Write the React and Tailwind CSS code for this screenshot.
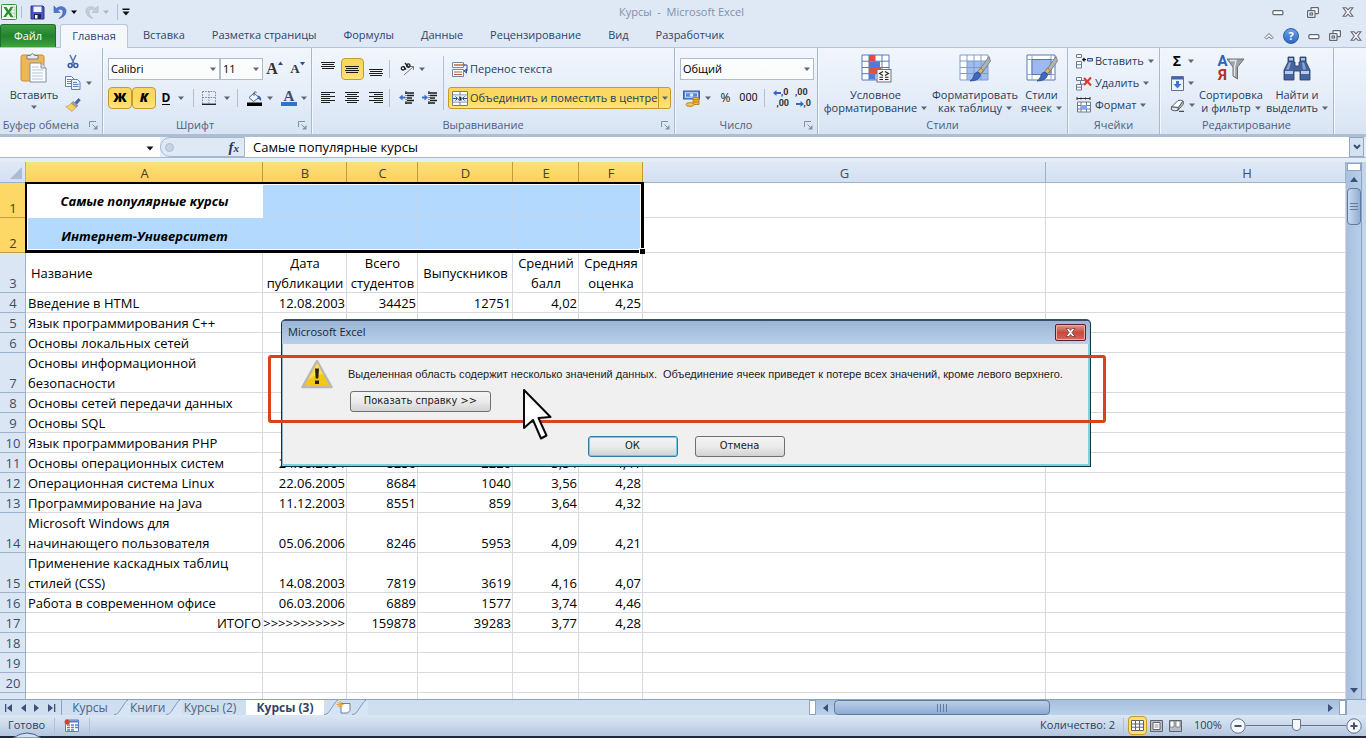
import React from "react";

const SANS = "font-['Open_Sans','Noto_Sans',sans-serif]";

/* ---------- small shared pieces ---------- */

function Arrow({ className = "" }) {
  return (
    <svg className={"shrink-0 " + className} width="6" height="4" viewBox="0 0 6 4" aria-hidden="true">
      <path d="M0 .5h6L3 4z" fill="#5c6675" />
    </svg>
  );
}

function Sep({ className = "h-[18px]" }) {
  return <span className={"w-px shrink-0 bg-[#b3c0d2] " + className} />;
}

function Launcher() {
  return (
    <button type="button" aria-label="Параметры группы" className="absolute bottom-1 right-1">
      <svg width="9" height="9" viewBox="0 0 9 9" fill="none" stroke="#8090a6">
        <path d="M.5 6V.5H7M3.500 3.500l3 3" />
        <path d="M8.500 4v4.500H4z" fill="#8090a6" stroke="none" />
      </svg>
    </button>
  );
}

function Group({ title, width, launcher, children }) {
  return (
    <section
      aria-label={title}
      className={
        "relative flex shrink-0 flex-col border-r border-[#a9b8cd] shadow-[1px_0_0_#f3f8fd] " + width
      }
    >
      <div className="flex h-[69px] items-start">{children}</div>
      <h2 className="text-center text-[11px] leading-4 text-[#4d6080]">{title}</h2>
      {launcher && <Launcher />}
    </section>
  );
}

function IconButton({ label, active, width = "w-[23px]", children }) {
  return (
    <button
      type="button"
      aria-label={label}
      className={
        "flex h-[22px] shrink-0 items-center justify-center gap-1 rounded-sm border [&>svg]:shrink-0 " +
        width +
        (active
          ? " border-[#c29b29] bg-gradient-to-b from-[#fbd667] via-[#fdd95a] to-[#fee57d]"
          : " border-transparent")
      }
    >
      {children}
    </button>
  );
}

function BigButton({ icon, lines, width, below }) {
  return (
    <button
      type="button"
      className={
        "flex shrink-0 flex-col items-center pt-1 text-[11px] leading-[13px] text-[#263c5f] " + width
      }
    >
      {icon}
      <span className="mt-1 whitespace-nowrap">{lines[0]}</span>
      {below ? (
        <Arrow className="mt-1" />
      ) : (
        <span className="flex items-center gap-1 whitespace-nowrap">
          {lines[1]}
          <Arrow />
        </span>
      )}
    </button>
  );
}

function SmallButton({ icon, text }) {
  return (
    <button type="button" className="flex h-[22px] items-center gap-[2px] text-[11px] text-[#263c5f]">
      {icon}
      <span>{text}</span>
      <Arrow className="ml-[2px]" />
    </button>
  );
}

function Combo({ label, value, width }) {
  return (
    <div className={"relative h-[22px] shrink-0 " + width}>
      <select
        aria-label={label}
        defaultValue={value}
        className="block h-[22px] w-full appearance-none border border-[#b0bccc] bg-white/80 pl-[2px] text-[11px] leading-4 text-black"
      >
        <option>{value}</option>
      </select>
      <Arrow className="pointer-events-none absolute right-1 top-[9px]" />
    </div>
  );
}

/* ---------- icons ---------- */

const XlLogo = () => (
  <svg width="16" height="16" viewBox="0 0 16 16">
    <rect x=".5" y=".5" width="15" height="15" rx="1" fill="#f2faf0" stroke="#3b8f3e" />
    <path d="M10 3h4v10h-4z" fill="#fff" stroke="#8fc58f" strokeWidth=".8" />
    <path d="M10 6h4M10 9h4" stroke="#8fc58f" strokeWidth=".8" />
    <path d="M2.500 3h3l2 3.200L9.700 3h2.600L9 8l3.500 5h-3L7.300 9.800 5 13H2.200L5.700 8z" fill="#2c8f34" />
  </svg>
);
const SaveIcon = () => (
  <svg width="15" height="15" viewBox="0 0 15 15">
    <path d="M1 1h12l1 1v12H1z" fill="#4a55c0" stroke="#2b3590" />
    <path d="M3.500 1.500h8v5.500h-8z" fill="#f3f5fc" />
    <path d="M4 9h7v5H4z" fill="#1f2552" />
    <path d="M5 10h2.500v3.500H5z" fill="#fff" />
  </svg>
);
const UndoIcon = () => (
  <svg width="14" height="14" viewBox="0 0 14 14">
    <path d="M1 1v6.500h6L4.800 5.300C7 3.300 10 4 10 7c0 2.500-1.500 4.500-4 6.500 5-1.500 7-4 7-7.500C13 1.500 7 .2 3.200 3.500z" fill="#4f79d0" stroke="#3058a8" strokeWidth=".6" />
  </svg>
);
const RedoIcon = () => (
  <svg width="14" height="14" viewBox="0 0 14 14">
    <path d="M13 1v6.500H7l2.200-2.200C7 3.300 4 4 4 7c0 2.500 1.500 4.500 4 6.500C3 12 1 9.500 1 6 1 1.500 7 .2 10.800 3.500z" fill="#c6ced8" stroke="#a9b3c0" strokeWidth=".6" />
  </svg>
);
const MinIcon = () => (
  <svg width="12" height="10" viewBox="0 0 12 10">
    <rect x=".9" y="3.700" width="10" height="4" rx="1" fill="#fff" stroke="#5f6875" strokeWidth="1.200" />
  </svg>
);
const RestoreIcon = () => (
  <svg width="12" height="11" viewBox="0 0 12 11" fill="#fff" stroke="#5f6875" strokeWidth="1.200">
    <rect x="4" y=".6" width="7.400" height="6" rx=".6" />
    <rect x=".6" y="3.600" width="7.400" height="6.800" rx=".6" />
    <rect x="3" y="6" width="2.600" height="2" />
  </svg>
);
const CloseIcon = () => (
  <svg width="12" height="10" viewBox="0 0 12 10">
    <path d="M1 .7h3l2 2.200L8 .7h3L7.700 5 11 9.300H8L6 7.100 4 9.300H1L4.300 5z" fill="#fff" stroke="#5f6875" strokeWidth="1.100" />
  </svg>
);
const PasteIcon = () => (
  <svg width="32" height="32" viewBox="0 0 32 32">
    <rect x="3" y="3" width="23" height="26" rx="2" fill="#eeb659" stroke="#c98f35" />
    <path d="M9 7V3.500h3.500Q14.500-.5 16.500 3.500H20V7z" fill="#e6e9ee" stroke="#77808d" />
    <path d="M12 11h11l5 5v14H12z" fill="#fdfeff" stroke="#7d8ea8" />
    <path d="M23 11v5h5" fill="#dbe4f2" stroke="#7d8ea8" />
    <path d="M14 15h7M14 18h11M14 21h11M14 24h11M14 27h11" stroke="#b5c3da" />
  </svg>
);
const CutIcon = () => (
  <svg width="14" height="15" viewBox="0 0 14 15" fill="none">
    <path d="M4 1l4 8.500M10 1L6 9.500" stroke="#5b7cb8" strokeWidth="1.600" />
    <circle cx="4.200" cy="11.500" r="2" stroke="#3458a8" strokeWidth="1.500" />
    <circle cx="9.800" cy="11.500" r="2" stroke="#3458a8" strokeWidth="1.500" />
  </svg>
);
const CopyIcon = () => (
  <svg width="16" height="14" viewBox="0 0 16 14" stroke="#5c7fc0">
    <path d="M.5.5h6l2 2v8h-8z" fill="#fff" />
    <path d="M2 3.500h4M2 5.500h5M2 7.500h5" />
    <path d="M6.500 3.500h6l2.500 2.500v7.500H6.500z" fill="#eaf1fc" />
    <path d="M8 6.500h4M8 8.500h5.500M8 10.500h5.500" />
  </svg>
);
const BrushIcon = () => (
  <svg width="16" height="14" viewBox="0 0 16 14">
    <path d="M10 4.500L13.500.5l1.800 1.600L12 6z" fill="#5367a5" stroke="#39498a" strokeWidth=".6" />
    <path d="M8.200 3.500l4.800 4-1.800 1.800-5-4z" fill="#9aa3b5" stroke="#68728a" strokeWidth=".6" />
    <path d="M6 5.300l5 4-4 4.200C5 11.500 3 11 .8 8.500 3 8.300 4.500 7 6 5.300z" fill="#f5d063" stroke="#b98f2c" strokeWidth=".6" />
  </svg>
);

const Lines = ({ rows, height = 14 }) => (
  <svg width="15" height={height} viewBox={"0 0 15 " + height} shapeRendering="crispEdges">
    {rows.map(([x, y, w], i) => (
      <rect key={i} x={x} y={y} width={w} height="1" fill="#1d1d1d" />
    ))}
  </svg>
);
const topLines = [[0, 0, 14], [1, 2, 12], [0, 4, 14], [1, 6, 12]];
const midLines = [[0, 4, 14], [1, 6, 12], [0, 8, 14], [1, 10, 12]];
const botLines = [[0, 7, 14], [1, 9, 12], [0, 11, 14], [1, 13, 12]];
const leftLines = [[0, 1, 14], [0, 3, 9], [0, 5, 14], [0, 7, 9], [0, 9, 14], [0, 11, 9]];
const centerLines = [[0, 1, 14], [2, 3, 10], [0, 5, 14], [2, 7, 10], [0, 9, 14], [2, 11, 10]];
const rightLines = [[0, 1, 14], [5, 3, 9], [0, 5, 14], [5, 7, 9], [0, 9, 14], [5, 11, 9]];

const OrientIcon = () => (
  <svg width="15" height="14" viewBox="0 0 15 14" fill="none" stroke="#222">
    <path d="M4 13L13.500 4.500M10 4.500h3.500V8" stroke="#777" />
    <circle cx="3" cy="6.300" r="1.700" strokeWidth="1.300" />
    <path d="M3.500 4L6 7.600M5 1l4 4.600" strokeWidth="1.300" />
    <circle cx="8.300" cy="3.500" r="1.700" strokeWidth="1.300" />
  </svg>
);
const IndentIcon = ({ right }) => (
  <svg width="16" height="14" viewBox="0 0 16 14">
    <path d="M6 2h9M8 4.500h7M8 7h5M8 9.500h7M6 12h7" stroke="#1d1d1d" strokeWidth="1.300" />
    <path d="M7 0v14" stroke="#1d1d1d" strokeDasharray="1 1" />
    <path d={right ? "M6 6.500L2.500 3.500v2H0v2h2.500v2z" : "M0 6.500l3.500-3v2H6v2H3.500v2z"} fill="#3f6fc4" />
  </svg>
);
const WrapIcon = () => (
  <svg width="16" height="15" viewBox="0 0 16 15">
    <path d="M.5.500h11v5H.5z" fill="#fff" stroke="#7486a5" />
    <path d="M2 3h11" stroke="#b5602c" strokeWidth="1.400" />
    <path d="M.5 7.500h11v7H.5z" fill="#fff" stroke="#7486a5" />
    <path d="M2 10h8M2 12.500h8" stroke="#b5602c" strokeWidth="1.200" />
    <path d="M12 3h3v6h-2M14.500 7L12 9l2.500 2z" fill="none" stroke="#2c4f94" />
  </svg>
);
const MergeIcon = () => (
  <svg width="16" height="15" viewBox="0 0 16 15">
    <path d="M.5.500h15v14H.5z" fill="#fff" stroke="#6d7c96" />
    <path d="M.5 4h15M.5 11h15M8 .5V4M8 11v3.500" stroke="#6d7c96" />
    <path d="M1 4.500h14v6H1z" fill="#dfeafa" />
    <path d="M1 7.500h4M3.500 5.500l2 2-2 2M15 7.500h-4M12.500 5.500l-2 2 2 2" fill="none" stroke="#2a4d9b" />
    <path d="M7 6.200q2-.8 2 .8v2.300M9 7.700q-2.300-.2-2.300.9T9 8.700" fill="none" stroke="#111" />
  </svg>
);
const BorderIcon = () => (
  <svg width="14" height="14" viewBox="0 0 14 14" fill="none" stroke="#7b8798">
    <path d="M.5.5h13v12M.5.5v12M7 .5v12M.5 6.500h13" strokeDasharray="1.500 1.200" />
    <path d="M0 13.300h14" stroke="#222" strokeWidth="1.400" />
  </svg>
);
const FillIcon = () => (
  <svg width="17" height="15" viewBox="0 0 17 15">
    <path d="M3 6.500L8 2l5 4.500-5.500 4z" fill="#eef3fb" stroke="#4c6186" />
    <path d="M8 5V1.500Q9.500-.5 10.500 2" fill="none" stroke="#4c6186" />
    <path d="M12 4.500q4 1 3 5.500-1.500-2-3.500-2.500z" fill="#3f62b2" />
    <path d="M1 11.500h15V15H1z" fill="#000" />
  </svg>
);
const MoneyIcon = () => (
  <svg width="18" height="17" viewBox="0 0 18 17">
    <rect x=".5" y="1" width="16" height="8" fill="#5b86d6" stroke="#3a5fae" />
    <rect x="2.500" y="2.800" width="12" height="4.400" fill="none" stroke="#cfe0fa" />
    <circle cx="8.500" cy="5" r="1.800" fill="#dbe7fb" />
    <path d="M10 7.500h6v7h-6z" fill="#eeb83b" stroke="#a97516" strokeWidth=".8" />
    <path d="M10 9.700h6M10 12h6" stroke="#a97516" strokeWidth=".8" />
    <ellipse cx="7" cy="14.500" rx="4" ry="1.900" fill="#f4c851" stroke="#a97516" strokeWidth=".8" />
  </svg>
);
const CondIcon = () => (
  <svg width="32" height="32" viewBox="0 0 32 32">
    <path d="M2 3h27v25H2z" fill="#fff" stroke="#5678b5" />
    <path d="M2 9.200h27M2 15.500h27M2 21.700h27M9 3v25M15 3v25M22 3v25" stroke="#5678b5" />
    <path d="M9 3h6v6H9zM9 16h12v5.500H9z" fill="#e2503c" />
    <path d="M9 9.500h11v6H9zM9 22h6v5.500H9z" fill="#4f7be0" />
    <rect x="17" y="17.500" width="14" height="12.500" fill="#f6f6f6" stroke="#70757d" />
    <path d="M23 19.500l-3.500 2 3.500 2M19.500 25.300H23M19.500 27.500H23M25 19.500l3.500 2-3.500 2M25 25.300h3.500M25 27.500h3.500" fill="none" stroke="#222" strokeWidth="1.100" />
  </svg>
);
const PaintStroke = () => (
  <g>
    <path d="M30 4.500L20.500 18l3 2.500L31.500 9z" fill="#aeb4b5" stroke="#6f7775" strokeWidth=".8" />
    <path d="M21.500 16l-2.800 3.800 2.600 2.200 3.200-3.600z" fill="#e0b565" stroke="#8c6a2a" strokeWidth=".8" />
    <path d="M18.500 20q3 .8 3 3.500-2 5.500-10.500 5.500 3-1.500 3.500-4.500.8-4 4-4.500z" fill="#3f68bd" stroke="#2b4c94" strokeWidth=".8" />
  </g>
);
const TableFmtIcon = () => (
  <svg width="32" height="32" viewBox="0 0 32 32">
    <path d="M1 3h28v25H1z" fill="#fff" />
    <path d="M8 9h21v19H8z" fill="#9fbdf1" />
    <path d="M1 3h28v25H1zM1 9h28M1 15.500h28M1 21.500h28M8 3v25M15 3v25M22 3v25" fill="none" stroke="#7f9ccb" />
    <PaintStroke />
  </svg>
);
const CellStyleIcon = () => (
  <svg width="32" height="32" viewBox="0 0 32 32">
    <path d="M1 3h28v25H1z" fill="#fff" stroke="#5678b5" />
    <path d="M1 7.500h28M1 22.500h28M6 3v25M25 3v25" stroke="#8ea6cf" />
    <path d="M6 7.500h19v15H6z" fill="#9db8f3" stroke="#5678b5" />
    <PaintStroke />
  </svg>
);
const CellsInsIcon = () => (
  <svg width="17" height="15" viewBox="0 0 17 15" fill="#fff" stroke="#6b7a94">
    <path d="M.5.5h5v3h-5zM.5 7.500h5v6.500h-5zM.5 10.700h5" />
    <path d="M11.500 4.500h5v2.500h-5z" fill="#b9d0f4" stroke="#32518f" />
    <path d="M10 5.700H7M8.500 4L6.800 5.700l1.700 1.700" fill="none" stroke="#111" strokeWidth="1.200" />
  </svg>
);
const CellsDelIcon = () => (
  <svg width="17" height="15" viewBox="0 0 17 15" fill="#fff" stroke="#6b7a94">
    <path d="M.5 1.500h5v3h-5zM.5 8.500h5v5.500h-5zM.5 11.200h5M4.500 4.500h5v3.500h-5z" />
    <path d="M8 2l7 7.500M15 1.500L8 9" stroke="#dc3a2c" strokeWidth="2" />
  </svg>
);
const CellsFmtIcon = () => (
  <svg width="17" height="16" viewBox="0 0 17 16" fill="none" stroke="#6b7a94">
    <path d="M1 0v3M1 1.500h13M14 0v3M5 .5v2M9.500 .5v2" stroke="#333" />
    <path d="M1.500 5h13v10h-13zM1.500 8.500h13M1.500 12h13M5 5v10M10.500 5v10" fill="#fff" />
    <path d="M5 8h6v4H5z" fill="#7ea4ea" stroke="none" />
  </svg>
);
const FillDownIcon = () => (
  <svg width="13" height="15" viewBox="0 0 13 15">
    <path d="M.5.500h12v14H.5z" fill="#eef3fb" stroke="#5c7196" />
    <path d="M1 1h11v2.500H1z" fill="#3f62b2" />
    <path d="M5 5h3v3h2.500l-4 4.500L2.500 8H5z" fill="#3f74dd" />
  </svg>
);
const EraserIcon = () => (
  <svg width="15" height="13" viewBox="0 0 15 13">
    <path d="M1.500 8L8 1.500q3-.8 5 .5L8.500 8.500z" fill="#fff" stroke="#555d69" />
    <path d="M1.500 8l7 .5-.8 3q-3.500 1-6.500-.8z" fill="#e1e5ec" stroke="#555d69" />
    <path d="M8.500 8.500L13 2q1 1.500.2 3.300L7.700 11.500z" fill="#c6ccd6" stroke="#555d69" />
    <path d="M9 12.300h5" stroke="#222" />
  </svg>
);
const SortIcon = () => (
  <div className="flex h-8 w-8 items-center justify-center">
    <span className="flex flex-col text-[15px] font-bold leading-[14px] font-['Roboto',sans-serif]">
      <span className="text-[#2f63b5]">А</span>
      <span className="text-[#b22f2a]">Я</span>
    </span>
    <svg className="-ml-[2px] shrink-0" width="19" height="26" viewBox="0 0 19 26">
      <path d="M1 4h17l-6.500 8v12L7 21v-9z" fill="#a0a2a4" stroke="#6d7073" />
      <path d="M4 5.500h6L8.500 12v9" fill="none" stroke="#e6e7e8" strokeWidth="1.400" />
    </svg>
  </div>
);
const FindIcon = () => (
  <svg width="32" height="32" viewBox="0 0 32 32" stroke="#24385f" strokeWidth=".8">
    <path d="M7 5h6v5h1v4h4v-4h1V5h6v5l4 8v10H19v-9h-6v9H3V18l4-8z" fill="#46659e" />
    <path d="M7.500 5.500h5V9h-5zM19.500 5.500h5V9h-5z" fill="#a9bfe4" />
    <path d="M4 19h8v3H4zM20 19h8v3h-8z" fill="#b9cbea" stroke="none" />
    <path d="M8 10.500l-3 7h3l2-7zM21 10.500l1 7h3l-2-7z" fill="#8aa5d6" stroke="none" />
  </svg>
);
const PageTri = ({ d, w = 8 }) => (
  <svg width={w} height="8" viewBox={"0 0 " + w + " 8"}>
    <path d={d} fill="#3b5179" />
  </svg>
);

/* ---------- title, tabs, ribbon ---------- */

function TitleBar() {
  return (
    <header className="relative flex h-6 shrink-0 items-center pl-px pr-3">
      <div className="flex flex-1 items-center">
        <XlLogo />
        <Sep className="ml-1 h-3" />
        <button type="button" aria-label="Сохранить" className="ml-2"><SaveIcon /></button>
        <button type="button" aria-label="Отменить" className="ml-2 flex items-center gap-1"><UndoIcon /><Arrow className="brightness-0" /></button>
        <button type="button" aria-label="Повторить" className="ml-2 flex items-center gap-1"><RedoIcon /><Arrow className="opacity-40" /></button>
        <Sep className="ml-2 h-4 bg-[#8191a8]" />
        <button type="button" aria-label="Настройка панели" className="ml-1">
          <svg width="8" height="8" viewBox="0 0 8 8"><path d="M.5.500h7v1.500h-7zM.5 3.500h7L4 7.500z" fill="#111" /></svg>
        </button>
      </div>
      <h1 className="pl-2 text-[11px] text-[#8090ab]">Курсы&nbsp; -&nbsp; Microsoft Excel</h1>
      <div className="flex flex-1 items-center justify-end gap-[23px]">
        <button type="button" aria-label="Свернуть"><MinIcon /></button>
        <button type="button" aria-label="Восстановить"><RestoreIcon /></button>
        <button type="button" aria-label="Закрыть"><CloseIcon /></button>
      </div>
    </header>
  );
}

const TABS = ["Вставка", "Разметка страницы", "Формулы", "Данные", "Рецензирование", "Вид", "Разработчик"];

function TabRow() {
  return (
    <nav className="flex h-6 shrink-0 items-stretch border-b border-[#b3c3d8] text-[11px] text-[#2f4468]">
      <button type="button" className="w-[56px] rounded-t-[3px] border border-b-0 border-[#1e6f2c] bg-gradient-to-b from-[#3f9f43] via-[#23812d] to-[#3fa43d] text-white">
        Файл
      </button>
      <button type="button" className="-mb-px ml-1 w-[68px] rounded-t-[3px] border border-b-0 border-[#b9c7da] bg-[#f4f8fd]">
        Главная
      </button>
      <div className="flex items-center gap-[27px] pl-[15px]">
        {TABS.map((t) => (
          <button type="button" key={t} className="whitespace-nowrap">{t}</button>
        ))}
      </div>
      <div className="ml-auto flex items-center gap-[9px] pr-1">
        <button type="button" aria-label="Свернуть ленту">
          <svg width="10" height="8" viewBox="0 0 10 8"><path d="M1 5.500L5 1.500l4 4-1.500 1.500L5 4.800 2.500 7z" fill="#fff" stroke="#5f6875" /></svg>
        </button>
        <button type="button" aria-label="Справка" className="size-4 rounded-full border border-[#2a5cae] bg-gradient-to-b from-[#6fa1e4] to-[#2d68c4] text-[11px] font-bold leading-[14px] text-white">?</button>
        <button type="button" aria-label="Свернуть книгу"><MinIcon /></button>
        <button type="button" aria-label="Восстановить книгу"><RestoreIcon /></button>
        <button type="button" aria-label="Закрыть книгу"><CloseIcon /></button>
      </div>
    </nav>
  );
}

const MiniArrow = ({ right }) => (
  <svg width="8" height="6" viewBox="0 0 8 6">
    <path d={right ? "M8 3L4.500 0v2H0v2h4.500v2z" : "M0 3l3.500-3v2H8v2H3.500v2z"} fill="#3668c0" />
  </svg>
);

function DecimalIcon({ more }) {
  return (
    <span className="flex w-4 flex-col text-[9px] font-bold leading-[11px] text-[#333] font-['Roboto',sans-serif]">
      <span className="flex items-center">{more && <MiniArrow />}{more ? ",0" : ",00"}</span>
      <span className="flex items-center justify-end">{!more && <MiniArrow right />}{more ? ",00" : ",0"}</span>
    </span>
  );
}

function Ribbon() {
  return (
    <div className="flex h-[86px] shrink-0 overflow-hidden bg-gradient-to-b from-[#f1f6fd] via-[#e6eef9] to-[#d8e4f3]">
      <Group title="Буфер обмена" width="w-[103px] [&>h2]:pr-5" launcher>
        <BigButton icon={<PasteIcon />} lines={["Вставить"]} width="w-[68px]" below />
        <div className="flex flex-col pt-[2px]">
          <IconButton label="Вырезать" width="w-[9px]"><span className="shrink-0"><CutIcon /></span></IconButton>
          <div className="flex items-center">
            <IconButton label="Копировать" width="w-[10px]"><span className="shrink-0"><CopyIcon /></span></IconButton>
            <Arrow className="ml-2" />
          </div>
          <IconButton label="Формат по образцу" width="w-[9px]"><span className="shrink-0"><BrushIcon /></span></IconButton>
        </div>
      </Group>

      <Group title="Шрифт" width="w-[209px] [&>h2]:pr-6" launcher>
        <div className="flex flex-col gap-[7px] pl-[5px] pt-[10px]">
          <div className="flex">
            <Combo label="Шрифт" value="Calibri" width="w-[112px]" />
            <Combo label="Размер шрифта" value="11" width="w-[43px]" />
            <IconButton label="Увеличить размер">
              <span className="-mr-1 text-[16px] font-bold leading-5 text-[#333] font-['Liberation_Serif',serif]">A</span>
              <svg className="self-start" width="5" height="7" viewBox="0 0 5 7"><path d="M0 6h5L2.500 2.500z" fill="#2c4f94" /></svg>
            </IconButton>
            <IconButton label="Уменьшить размер">
              <span className="-mr-1 text-[13px] font-bold leading-5 text-[#333] font-['Liberation_Serif',serif]">A</span>
              <svg className="self-start" width="5" height="7" viewBox="0 0 5 7"><path d="M0 3h5L2.500 6.500z" fill="#2c4f94" /></svg>
            </IconButton>
          </div>
          <div className="flex items-center">
            <IconButton label="Полужирный" active width="w-6"><b className="text-[13px] font-extrabold">Ж</b></IconButton>
            <IconButton label="Курсив" active width="w-6"><i className="text-[13px] font-extrabold">К</i></IconButton>
            <IconButton label="Подчеркнутый" width="w-[34px]"><b className="border-b border-black text-[12px] leading-[13px]">D</b><Arrow className="ml-1" /></IconButton>
            <Sep className="ml-[3px] h-[18px]" />
            <IconButton label="Границы" width="w-[43px]"><BorderIcon /><Arrow className="ml-1" /></IconButton>
            <Sep />
            <IconButton label="Цвет заливки" width="w-[42px]"><FillIcon /><Arrow /></IconButton>
            <IconButton label="Цвет текста" width="w-[28px]">
              <span className="w-4 shrink-0 border-b-4 border-[#2e74c9] text-center text-[15px] font-bold leading-[12px] text-[#3d4f6d] font-['Liberation_Serif',serif]">A</span>
              <Arrow />
            </IconButton>
          </div>
        </div>
      </Group>

      <Group title="Выравнивание" width="w-[363px] [&>h2]:pr-5" launcher>
        <div className="flex flex-col gap-[7px] pl-[5px] pt-[10px]">
          <div className="flex items-center gap-px">
            <IconButton label="По верхнему краю"><Lines rows={topLines} /></IconButton>
            <IconButton label="По середине" active><Lines rows={midLines} /></IconButton>
            <IconButton label="По нижнему краю"><Lines rows={botLines} /></IconButton>
            <Sep />
            <IconButton label="Ориентация" width="w-[42px]"><OrientIcon /><Arrow /></IconButton>
          </div>
          <div className="flex items-center gap-px">
            <IconButton label="По левому краю"><Lines rows={leftLines} /></IconButton>
            <IconButton label="По центру"><Lines rows={centerLines} /></IconButton>
            <IconButton label="По правому краю"><Lines rows={rightLines} /></IconButton>
            <Sep />
            <div className="flex pl-1">
              <IconButton label="Уменьшить отступ"><IndentIcon /></IconButton>
              <IconButton label="Увеличить отступ"><IndentIcon right /></IconButton>
            </div>
          </div>
        </div>
        <Sep className="ml-auto mt-2 h-[54px]" />
        <div className="flex flex-col gap-[7px] pl-1 pr-[3px] pt-[10px] text-[11px] text-[#263c5f]">
          <button type="button" className="flex h-[22px] items-center gap-[2px] pl-1"><WrapIcon />Перенос текста</button>
          <div className="flex h-[22px] items-stretch rounded-[3px] border border-[#c29b29] bg-gradient-to-b from-[#fbd667] via-[#fdd95a] to-[#fee57d]">
            <button type="button" className="flex w-[209px] items-center gap-[2px] whitespace-nowrap pl-[3px] [&>svg]:shrink-0"><MergeIcon />Объединить и поместить в центре</button>
            <button type="button" aria-label="Варианты объединения" className="flex w-3 items-center justify-center border-l border-[#c29b29]"><Arrow /></button>
          </div>
        </div>
      </Group>

      <Group title="Число" width="w-[143px] [&>h2]:pr-5" launcher>
        <div className="flex flex-col gap-[7px] pl-[5px] pt-[10px]">
          <Combo label="Числовой формат" value="Общий" width="w-[134px]" />
          <div className="flex items-center text-[12px] text-[#222]">
            <IconButton label="Денежный формат" width="w-[34px]"><MoneyIcon /><Arrow /></IconButton>
            <IconButton label="Процентный формат">%</IconButton>
            <IconButton label="Формат с разделителями"><span className="text-[11px] font-['Roboto',sans-serif]">000</span></IconButton>
            <Sep className="ml-1 mr-2 h-[18px]" />
            <div className="flex gap-[6px]">
              <button type="button" aria-label="Увеличить разрядность"><DecimalIcon more /></button>
              <button type="button" aria-label="Уменьшить разрядность"><DecimalIcon /></button>
            </div>
          </div>
        </div>
      </Group>

      <Group title="Стили" width="w-[250px]">
        <BigButton icon={<CondIcon />} lines={["Условное", "форматирование"]} width="w-[115px]" />
        <BigButton icon={<TableFmtIcon />} lines={["Форматировать", "как таблицу"]} width="w-[84px]" />
        <BigButton icon={<CellStyleIcon />} lines={["Стили", "ячеек"]} width="w-[49px]" />
      </Group>

      <Group title="Ячейки" width="w-[92px]">
        <div className="flex flex-col pl-2 pt-[2px]">
          <SmallButton icon={<CellsInsIcon />} text="Вставить" />
          <SmallButton icon={<CellsDelIcon />} text="Удалить" />
          <SmallButton icon={<CellsFmtIcon />} text="Формат" />
        </div>
      </Group>

      <Group title="Редактирование" width="w-[174px]">
        <div className="flex flex-col pl-[6px] pt-[2px]">
          <IconButton label="Сумма" width="w-[32px]"><b className="w-[13px] text-[14px] leading-5 text-black">Σ</b><Arrow /></IconButton>
          <IconButton label="Заполнить" width="w-[32px]"><FillDownIcon /><Arrow /></IconButton>
          <IconButton label="Очистить" width="w-[32px]"><EraserIcon /><Arrow /></IconButton>
        </div>
        <BigButton icon={<SortIcon />} lines={["Сортировка", "и фильтр"]} width="w-[66px]" />
        <BigButton icon={<FindIcon />} lines={["Найти и", "выделить"]} width="w-[66px]" />
      </Group>
    </div>
  );
}

function FormulaBar() {
  return (
    <div className="shrink-0 border-t-[3px] border-[#aebdd2] bg-[#e4edf8]">
      <div className="mb-1 flex h-[21px] items-stretch border-b border-[#a6b6cc]">
        <div className="relative w-40 bg-white">
          <input aria-label="Имя" className="h-full w-full bg-transparent px-2 text-[12px] outline-none" />
          <svg className="absolute right-[6px] top-[9px]" width="8" height="5" viewBox="0 0 8 5"><path d="M.5.500h7L4 4.500z" fill="#111" /></svg>
        </div>
        <div className="flex w-[85px] items-center justify-between rounded-l-full border border-[#a6b9d2] bg-[#dfe9f6] pl-1 pr-[5px]">
          <span className="size-[9px] rounded-full border border-[#aebcd0] bg-[#c6d3e4]" />
          <button type="button" aria-label="Вставить функцию" className="text-[15px] font-bold italic leading-none text-[#263860] font-['Liberation_Serif',serif]">
            f<span className="text-[11px]">x</span>
          </button>
        </div>
        <input aria-label="Строка формул" defaultValue="Самые популярные курсы" className="min-w-0 flex-1 bg-white px-2 pt-[2px] text-[13px] text-black outline-none" />
        <button type="button" aria-label="Развернуть строку формул" className="mr-[2px] flex w-[15px] items-center justify-center border border-[#93a7c4] bg-[#d3e1f2]">
          <svg width="8" height="6" viewBox="0 0 8 6" fill="none" stroke="#3d4f6d" strokeWidth="2"><path d="M1 1l3 3 3-3" /></svg>
        </button>
      </div>
    </div>
  );
}

/* ---------- sheet ---------- */

const ROWS = [
  ["Введение в HTML", "12.08.2003", "34425", "12751", "4,02", "4,25"],
  ["Язык программирования С++"],
  ["Основы локальных сетей"],
  ["Основы информационной безопасности"],
  ["Основы сетей передачи данных"],
  ["Основы SQL"],
  ["Язык программирования PHP"],
  ["Основы операционных систем", "24.08.2004", "8256", "2226", "3,54", "4,41"],
  ["Операционная система Linux", "22.06.2005", "8684", "1040", "3,56", "4,28"],
  ["Программирование на Java", "11.12.2003", "8551", "859", "3,64", "4,32"],
  ["Microsoft Windows для начинающего пользователя", "05.06.2006", "8246", "5953", "4,09", "4,21"],
  ["Применение каскадных таблиц стилей (CSS)", "14.08.2003", "7819", "3619", "4,16", "4,07"],
  ["Работа в современном офисе", "06.03.2006", "6889", "1577", "3,74", "4,46"],
  ["ИТОГО", ">>>>>>>>>>>", "159878", "39283", "3,77", "4,28"],
  [], [], [], [],
];

const LINE = "shadow-[inset_-1px_-1px_0_#d6d9e0]";
const ROWHEAD = "bg-[#dbe6f4] text-center align-bottom font-normal text-[#3b4d6e] shadow-[inset_-1px_-1px_0_#9fb2cc]";
const COLHEAD = "h-[21px] font-normal leading-5";
const PICKED = "bg-gradient-to-b from-[#fddf7e] to-[#fcd154] text-[#4a4022] shadow-[inset_-1px_-1px_0_#c59a3c]";
const PLAIN = "bg-gradient-to-b from-[#dfe9f6] to-[#d3e0f0] text-[#3b4d6e] shadow-[inset_-1px_-1px_0_#9fb2cc]";
const PICKED_ROW = "bg-[#fdd866] text-center align-bottom font-normal text-[#4a4022] shadow-[inset_-1px_-1px_0_#c59a3c]";
const BLUE = "bg-[#b3d9ff] shadow-[inset_-1px_-1px_0_#c2d5ea]";

function Sheet() {
  return (
    <div className="relative min-w-0 flex-1 overflow-hidden bg-white">
      <table className="w-full table-fixed border-separate border-spacing-0 text-[13px] leading-5 text-black">
        <colgroup>
          <col className="w-[26px]" />
          <col className="w-[237px]" />
          <col className="w-[84px]" />
          <col className="w-[71px]" />
          <col className="w-[95px]" />
          <col className="w-[66px]" />
          <col className="w-[64px]" />
          <col className="w-[403px]" />
          <col />
        </colgroup>
        <thead>
          <tr>
            <th aria-label="Выделить все" className={COLHEAD + " " + PLAIN}>
              <svg className="ml-auto mr-1" width="12" height="12" viewBox="0 0 12 12"><path d="M12 0v12H0z" fill="#a9bdd8" /></svg>
            </th>
            {["A", "B", "C", "D", "E", "F"].map((c) => (
              <th key={c} scope="col" className={COLHEAD + " " + PICKED}>{c}</th>
            ))}
            <th scope="col" className={COLHEAD + " " + PLAIN}>G</th>
            <th scope="col" className={COLHEAD + " pl-[102px] " + PLAIN}>H</th>
          </tr>
        </thead>
        <tbody>
          <tr className="h-[35px]">
            <th scope="row" className={PICKED_ROW}>1</th>
            <td className="text-center font-bold italic">Самые популярные курсы</td>
            {[1, 2, 3, 4, 5].map((i) => <td key={i} className={BLUE} />)}
            <td className={LINE} /><td className={LINE} />
          </tr>
          <tr className="h-[35px]">
            <th scope="row" className={PICKED_ROW}>2</th>
            <td className={"text-center font-bold italic " + BLUE}>Интернет-Университет</td>
            {[1, 2, 3, 4, 5].map((i) => <td key={i} className={BLUE} />)}
            <td className={LINE} /><td className={LINE} />
          </tr>
          <tr className="h-10 text-center">
            <th scope="row" className={ROWHEAD}>3</th>
            <td className={"pl-[5px] text-left " + LINE}>Название</td>
            <td className={LINE}>Дата<br />публикации</td>
            <td className={LINE}>Всего<br />студентов</td>
            <td className={LINE}>Выпускников</td>
            <td className={LINE}>Средний<br />балл</td>
            <td className={LINE}>Средняя<br />оценка</td>
            <td className={LINE} /><td className={LINE} />
          </tr>
          {ROWS.map((r, i) => (
            <tr key={i} className="h-5">
              <th scope="row" className={ROWHEAD}>{i + 4}</th>
              <td className={"px-[2px] " + LINE + (r[0] === "ИТОГО" ? " text-right" : "")}>
                <span className={r[0] && r[0].length > 29 ? "block max-w-[210px]" : "block whitespace-nowrap"}>{r[0]}</span>
              </td>
              {[1, 2, 3, 4, 5].map((c) => (
                <td key={c} className={"whitespace-nowrap pr-[2px] text-right align-bottom " + LINE}>{r[c]}</td>
              ))}
              <td className={LINE} /><td className={LINE} />
            </tr>
          ))}
        </tbody>
      </table>
      <div className="pointer-events-none absolute left-[25px] top-5 h-[71px] w-[619px] border-b-[3px] border-l-2 border-r-[3px] border-t-2 border-black shadow-[inset_0_0_0_1px_#fff]">
        <span className="absolute -bottom-1 -right-[4px] size-[6px] border-l border-t border-white bg-black" />
      </div>
    </div>
  );
}

function VScroll() {
  return (
    <div className="flex w-5 shrink-0 bg-[#c3d5ea]">
      <div className="flex w-4 flex-col items-center border-r border-[#8ba2c2] bg-gradient-to-r from-[#a8c0de] to-[#b9cfe8]">
        <span className="mt-px h-2 w-[14px] border border-[#8ba2c2] bg-white" />
        <button type="button" aria-label="Вверх" className="flex h-[17px] items-center"><svg width="8" height="5" viewBox="0 0 8 5"><path d="M0 5h8L4 0z" fill="#3b5179" /></svg></button>
        <span className="flex h-[37px] w-[14px] flex-col items-center justify-center gap-[2px] rounded-sm border border-[#5f7ba3] bg-gradient-to-r from-[#c9daee] to-[#90aed3]">
          <i className="h-px w-2 bg-[#5f7ba3]" /><i className="h-px w-2 bg-[#5f7ba3]" /><i className="h-px w-2 bg-[#5f7ba3]" />
        </span>
        <button type="button" aria-label="Вниз" className="mt-auto flex h-[17px] items-center"><svg width="8" height="5" viewBox="0 0 8 5"><path d="M0 0h8L4 5z" fill="#3b5179" /></svg></button>
      </div>
    </div>
  );
}

function Slash() {
  return (
    <svg className="shrink-0" width="16" height="15" viewBox="0 0 16 15">
      <path d="M0 15Q3 15 4 13L12 1Q13 0 15 0H16V15z" fill="#d6e4f3" />
      <path d="M0 14.500Q3 14.500 4.500 12.500L12 1.500Q12.800.4 14 .4" fill="none" stroke="#7f98bb" />
    </svg>
  );
}

function SheetTabs() {
  return (
    <div className="flex h-4 shrink-0 items-stretch border-t border-[#8ba2c2] bg-[#d0dff0] text-[12px] leading-[15px] text-[#4c6287]">
      <div className="flex w-[62px] items-center justify-between border-r border-[#8ba2c2] pl-1 pr-[5px]">
        <button type="button" aria-label="Первый лист"><PageTri d="M1 0h1.300v8H1zM8 0v8L3 4z" /></button>
        <button type="button" aria-label="Предыдущий лист"><PageTri w={5} d="M5 0v8L0 4z" /></button>
        <button type="button" aria-label="Следующий лист"><PageTri w={5} d="M0 0v8l5-4z" /></button>
        <button type="button" aria-label="Последний лист"><PageTri d="M6 0h1.300v8H6zM0 0v8l5-4z" /></button>
      </div>
      <button type="button" className="w-[52px] pl-1">Курсы</button>
      <Slash />
      <button type="button" className="w-8">Книги</button>
      <span className="pl-1" /><Slash />
      <button type="button" className="w-[56px] whitespace-nowrap">Курсы (2)</button>
      <span className="w-2" />
      <button type="button" className="w-[78px] whitespace-nowrap bg-white font-bold text-[#2f4468]">Курсы (3)</button>
      <Slash />
      <button type="button" aria-label="Вставить лист" className="-ml-1 flex w-4 items-center">
        <svg className="shrink-0" width="15" height="13" viewBox="0 0 15 13"><path d="M5 2.500h9v7L11.500 12H5z" fill="#fff" stroke="#6b7fa3" /><path d="M4 0v7M.5 3.500h7M1.500 1l5 5M6.500 1l-5 5" stroke="#e8a53a" /></svg>
      </button>
      <Slash />
      <div className="ml-auto flex w-[537px] items-stretch">
        <span className="w-[7px] border border-[#8ba2c2] bg-white" />
        <div className="flex flex-1 items-stretch bg-gradient-to-b from-[#a5bfde] to-[#bdd2ea]">
          <button type="button" aria-label="Влево" className="flex w-[18px] items-center justify-center"><PageTri w={5} d="M5 0v8L0 4z" /></button>
          <span className="flex w-[216px] items-center justify-center gap-[2px] rounded-sm border border-[#5f7ba3] bg-gradient-to-b from-[#b9cfe8] to-[#8dacd2]">
            <i className="h-2 w-px bg-[#5f7ba3]" /><i className="h-2 w-px bg-[#5f7ba3]" /><i className="h-2 w-px bg-[#5f7ba3]" /><i className="h-2 w-px bg-[#5f7ba3]" />
          </span>
          <button type="button" aria-label="Вправо" className="ml-auto flex w-[18px] items-center justify-center"><PageTri w={5} d="M0 0v8l5-4z" /></button>
        </div>
        <span className="w-[7px] border border-[#8ba2c2] bg-white" />
      </div>
      <span className="w-5 border-l border-[#8ba2c2]" />
    </div>
  );
}

function RoundButton({ label, d }) {
  return (
    <button type="button" aria-label={label}>
      <svg width="16" height="16" viewBox="0 0 16 16"><circle cx="8" cy="8" r="7.200" fill="#f4f7fb" stroke="#66758c" /><path d={d} stroke="#44546e" strokeWidth="2" /></svg>
    </button>
  );
}

function StatusBar() {
  return (
    <footer className="relative flex h-[23px] shrink-0 items-center border-b-2 border-[#1d2a3d] bg-gradient-to-b from-[#dce7f4] via-[#c9d8ea] to-[#b4c7df] pl-2 pr-[4px] text-[11px] text-[#2b3f60]">
      <span className="w-[46px]">Готово</span>
      <Sep className="h-4 bg-[#93a6c0]" />
      <button type="button" aria-label="Запись макроса" className="ml-[9px]">
        <svg width="15" height="13" viewBox="0 0 15 13"><path d="M1.500 1h13v11.500h-13z" fill="#fff" stroke="#5c7fc0" /><path d="M2 1.500h12v2H2z" fill="#4f7bd0" /><path d="M3 6h3M7 6h3M11 6h3M3 8.500h3M7 8.500h3M11 8.500h3M3 11h3M7 11h3" stroke="#5c7fc0" strokeWidth="1.300" /><circle cx="3.200" cy="3" r="2.600" fill="#d6422f" /></svg>
      </button>
      <Sep className="ml-[10px] h-4 bg-[#93a6c0]" />
      <svg className="absolute -bottom-[2px] left-3" width="30" height="6" viewBox="0 0 30 6"><path d="M1 6Q15-4 29 6z" fill="#cfe0ee" stroke="#46617d" /></svg>
      <div className="ml-auto flex items-center">
        <span>Количество: 2</span>
        <Sep className="ml-2 mr-1 h-4 bg-[#93a6c0]" />
        <button type="button" aria-label="Обычный" className="flex h-[19px] w-[19px] items-center justify-center rounded-sm border border-[#c29b29] bg-[#fddf78]">
          <svg width="13" height="11" viewBox="0 0 13 11"><path d="M.5.500h12v10H.5zM.5 4h12M.5 7.200h12M4.500.5v10M8.500.5v10" fill="#fff" stroke="#5d6470" /></svg>
        </button>
        <button type="button" aria-label="Разметка страницы" className="ml-[3px]">
          <svg width="13" height="12" viewBox="0 0 13 12"><path d="M.5.500h12v11H.5z" fill="#b9bec6" stroke="#5d6470" /><path d="M3 2.500h7v7H3z" fill="#fff" stroke="#5d6470" /><path d="M4.500 5h4M4.500 7h4" stroke="#8a909a" /></svg>
        </button>
        <button type="button" aria-label="Страничный режим" className="ml-[6px]">
          <svg width="13" height="12" viewBox="0 0 13 12"><path d="M.5.500h12v11H.5z" fill="#b9bec6" stroke="#5d6470" /><path d="M1 1h4v6H1zM7 1h4v6H7z" fill="#fff" stroke="#5d6470" strokeWidth=".7" /></svg>
        </button>
        <span className="ml-3 w-9">100%</span>
        <RoundButton label="Уменьшить" d="M4.500 8h7" />
        <input
          type="range"
          aria-label="Масштаб"
          defaultValue="50"
          className="h-3 w-[100px] appearance-none bg-transparent [&::-webkit-slider-runnable-track]:h-px [&::-webkit-slider-runnable-track]:bg-[#66758c] [&::-webkit-slider-thumb]:-mt-[6px] [&::-webkit-slider-thumb]:h-3 [&::-webkit-slider-thumb]:w-[9px] [&::-webkit-slider-thumb]:appearance-none [&::-webkit-slider-thumb]:rounded-b-[4px] [&::-webkit-slider-thumb]:border [&::-webkit-slider-thumb]:border-[#66758c] [&::-webkit-slider-thumb]:bg-[#f4f7fb]"
        />
        <RoundButton label="Увеличить" d="M4.500 8h7M8 4.500v7" />
      </div>
    </footer>
  );
}

/* ---------- dialog ---------- */

const DLG_BTN = "border text-[11px] text-[#1c1c1c] rounded-[3px] bg-gradient-to-b from-[#f4f4f4] via-[#ebebeb] to-[#d2d2d2]";

function Dialog() {
  return (
    <div role="dialog" aria-labelledby="dlg-title" className="absolute left-[281px] top-[319px] w-[810px] rounded-t-[5px] border border-t-2 border-[#16323c] border-t-[#3a4c66] bg-[#f0f0f0] shadow-[inset_-2px_-2px_0_#7fd0dc,inset_1px_0_0_#8fb7c8] font-['DejaVu_Sans_Condensed','DejaVu_Sans',sans-serif]">
      <div className="mr-px flex h-[23px] items-center justify-between rounded-t-[3px] bg-gradient-to-b from-[#9bb5d5] to-[#b9d0ea] pl-[6px] pr-[3px]">
        <h2 id="dlg-title" className="text-[11px] text-[#1b2433] font-['Open_Sans','Noto_Sans',sans-serif]">Microsoft Excel</h2>
        <button type="button" aria-label="Закрыть" className="flex h-[17px] w-[31px] items-center justify-center rounded-[2px] border border-[#5b1f24] bg-gradient-to-b from-[#e0958c] via-[#c8493d] to-[#d4695a] shadow-[inset_0_0_0_1px_#e9b0a8]">
          <svg width="11" height="9" viewBox="0 0 11 9"><path d="M1 .5h2.800L5.500 2.400 7.200.5H10L7 4.500l3 4H7.200L5.500 6.600 3.800 8.500H1l3-4z" fill="#fff" stroke="#6b3a3c" strokeWidth=".8" /></svg>
        </button>
      </div>
      <div className="flex items-start pl-[18px] pt-[15px]">
        <svg className="shrink-0" width="34" height="30" viewBox="0 0 34 30">
          <path d="M17 2L31.500 28h-29z" fill="#f6c816" stroke="#b9b9b0" strokeWidth="2.500" strokeLinejoin="round" />
          <path d="M17 4l6 11Q14 16 8 21z" fill="#fbe35a" opacity=".8" />
          <path d="M15 9.500h4l-.7 10h-2.600zM15 21.500h4v3.500h-4z" fill="#25230f" />
        </svg>
        <div className="flex flex-col items-start gap-[9px] pl-[14px] pt-[7px]">
          <p className="whitespace-nowrap text-[11px] leading-4 text-[#1c1c1c] font-['Liberation_Sans',sans-serif]">
            Выделенная область содержит несколько значений данных.&nbsp; Объединение ячеек приведет к потере всех значений, кроме левого верхнего.
          </p>
          <button type="button" className={"ml-[2px] h-[21px] w-[141px] border-[#707070] " + DLG_BTN}>Показать справку &gt;&gt;</button>
        </div>
      </div>
      <div className="flex justify-center gap-[17px] pb-[9px] pt-6">
        <button type="button" className={"h-[21px] w-[90px] border-[#2f7fa8] shadow-[inset_0_0_0_1px_#6fcbe8] " + DLG_BTN}>ОК</button>
        <button type="button" className={"h-[21px] w-[90px] border-[#707070] " + DLG_BTN}>Отмена</button>
      </div>
    </div>
  );
}

export default function App() {
  return (
    <div className={"relative flex h-screen flex-col overflow-hidden bg-[#dfe9f6] " + SANS}>
      <TitleBar />
      <TabRow />
      <Ribbon />
      <FormulaBar />
      <main className="flex min-h-0 flex-1">
        <Sheet />
        <VScroll />
      </main>
      <SheetTabs />
      <StatusBar />
      <Dialog />
      <div className="pointer-events-none absolute left-[268px] top-[355px] h-[68px] w-[838px] rounded-[3px] border-[3px] border-[#d8431d]" />
      <svg className="pointer-events-none absolute left-[522px] top-[387px]" width="32" height="54" viewBox="0 0 32 54">
        <path d="M2 3v38l9-8 8 18.500 5.500-3L16.500 31l12-1z" fill="#fff" stroke="#0a0a0a" strokeWidth="2" strokeLinejoin="round" />
      </svg>
    </div>
  );
}
